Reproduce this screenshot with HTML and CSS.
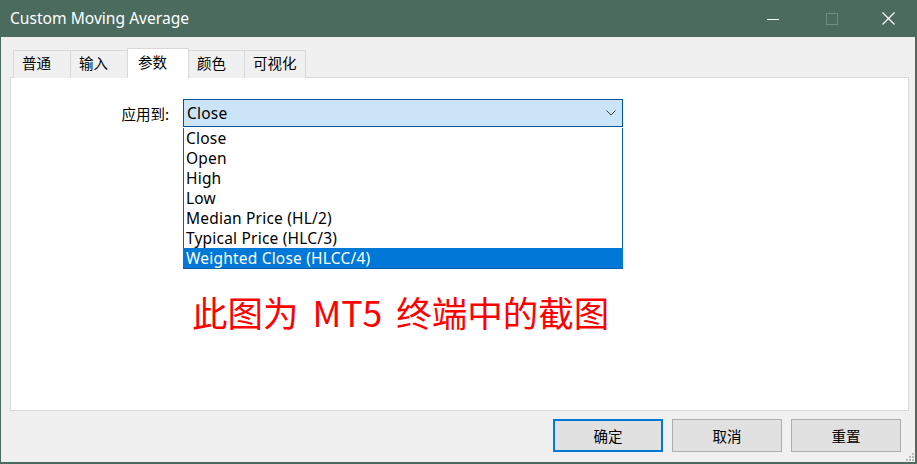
FILE: index.html
```html
<!DOCTYPE html>
<html lang="zh">
<head>
<meta charset="utf-8">
<title>Custom Moving Average</title>
<link rel="stylesheet" href="styles.css">
</head>
<body>
<div class="window">
  <div class="titlebar">
    <span class="title">Custom Moving Average</span>
    <div class="controls">
      <span class="ctl"><svg width="12" height="12" viewBox="0 0 12 12"><path d="M0 6.5H12" stroke="#fff" stroke-width="1"/></svg></span>
      <span class="ctl"><svg width="12" height="12" viewBox="0 0 12 12"><rect x="0.5" y="0.5" width="11" height="11" fill="none" stroke="#6f8b81" stroke-width="1"/></svg></span>
      <span class="ctl"><svg width="13" height="13" viewBox="0 0 13 13"><path d="M0.5 0.5L12.5 12.5M12.5 0.5L0.5 12.5" stroke="#fff" stroke-width="1.2"/></svg></span>
    </div>
  </div>
  <div class="body">
    <div class="tabs">
      <div class="tab">普通</div>
      <div class="tab">输入</div>
      <div class="tab active">参数</div>
      <div class="tab narrow">颜色</div>
      <div class="tab">可视化</div>
    </div>
    <div class="panel">
      <div class="row">
        <label class="label">应用到:</label>
        <div class="combo">
          <span class="combo-value">Close</span>
          <svg class="chev" width="10" height="6" viewBox="0 0 10 6"><path d="M0.5 0.5L5 5L9.5 0.5" fill="none" stroke="#444" stroke-width="1"/></svg>
          <ul class="list">
            <li>Close</li>
            <li>Open</li>
            <li>High</li>
            <li>Low</li>
            <li>Median Price (HL/2)</li>
            <li>Typical Price (HLC/3)</li>
            <li class="sel">Weighted Close (HLCC/4)</li>
          </ul>
        </div>
      </div>
      <div class="note">此图为 MT5 终端中的截图</div>
    </div>
    <div class="footer">
      <button class="btn primary">确定</button>
      <button class="btn">取消</button>
      <button class="btn">重置</button>
    </div>
    <div class="grip">
      <i></i><i></i><i></i><i></i><i></i><i></i>
    </div>
  </div>
</div>
</body>
</html>
```

FILE: styles.css
```css
* { box-sizing: border-box; }
html, body { margin: 0; padding: 0; }
body {
  width: 917px;
  height: 464px;
  overflow: hidden;
  font-family: "Noto Sans", "Noto Sans CJK SC", sans-serif;
  background: #4b6b5f;
}
.window {
  width: 917px;
  height: 464px;
  display: flex;
  flex-direction: column;
  background: #4b6b5f;
  padding: 0 2px 2px 1px;
}
.titlebar {
  height: 37px;
  display: flex;
  align-items: center;
  justify-content: space-between;
  color: #fff;
  flex: none;
}
.title {
  font-size: 15.6px;
  padding-left: 9px;
  padding-bottom: 1px;
}
.controls {
  display: flex;
  height: 100%;
}
.ctl {
  width: 59px;
  display: flex;
  align-items: center;
  justify-content: center;
}
.ctl:last-child { width: 54px; }
.body {
  flex: 1;
  background: #f0f0f0;
  position: relative;
  display: flex;
  flex-direction: column;
  padding: 11px 6px 0 9px;
}
.tabs {
  display: flex;
  align-items: flex-end;
  height: 30px;
  padding-left: 2px;
  position: relative;
  z-index: 2;
}
.tab {
  height: 28px;
  min-width: 58px;
  padding: 0 8px;
  border: 1px solid #d9d9d9;
  border-bottom: none;
  margin-left: -1px;
  background: #f0f0f0;
  font-family: "Noto Sans CJK SC", sans-serif;
  font-size: 14.5px;
  line-height: 24px;
  color: #000;
}
.tab:first-child { margin-left: 1px; }
.tab.narrow { min-width: 57px; }
.tab.active {
  height: 30px;
  min-width: 62px;
  background: #fff;
  padding-left: 10px;
  line-height: 25px;
  position: relative;
  z-index: 3;
}
.panel {
  margin-top: -1px;
  height: 334px;
  border: 1px solid #d9d9d9;
  background: #fff;
  padding-top: 21px;
  position: relative;
  z-index: 1;
}
.row {
  display: flex;
  align-items: center;
  height: 28px;
}
.label {
  width: 158px;
  text-align: right;
  font-family: "Noto Sans CJK SC", sans-serif;
  font-size: 14.5px;
  margin-right: 14px;
}
.combo {
  position: relative;
  width: 440px;
  height: 28px;
  border: 1px solid #005499;
  background: #cce4f7;
  display: flex;
  align-items: center;
  justify-content: space-between;
  padding: 0 6px 0 3px;
  font-size: 15.5px;
  letter-spacing: 0.2px;
}
.combo-value { line-height: 26px; }
.list {
  position: absolute;
  left: -1px;
  top: 28px;
  width: 440px;
  margin: 0;
  padding: 0;
  list-style: none;
  background: #fff;
  border: 1px solid #0a5fa8;
  border-top: none;
}
.list li {
  height: 20px;
  line-height: 20px;
  padding-left: 2px;
  font-size: 15.5px;
  letter-spacing: 0.2px;
  color: #000;
  white-space: nowrap;
}
.list li.sel {
  background: #0078d7;
  color: #fff;
  margin: 0 -1px;
  padding-left: 3px;
}
.note {
  margin-top: 163px;
  padding-left: 181px;
  font-family: "Noto Sans CJK SC", sans-serif;
  font-size: 35.5px;
  line-height: 44px;
  word-spacing: 6px;
  color: #ff0000;
}
.footer {
  display: flex;
  justify-content: flex-end;
  gap: 9px;
  margin-top: 8px;
  padding-right: 8px;
}
.btn {
  width: 110px;
  height: 33px;
  border: 1px solid #adadad;
  background: #e1e1e1;
  font-family: "Noto Sans CJK SC", sans-serif;
  font-size: 14.5px;
  color: #000;
  padding: 0;
}
.btn.primary {
  border: 2px solid #0078d7;
}
.grip {
  position: absolute;
  right: 1px;
  bottom: 1px;
  width: 10px;
  height: 10px;
}
.grip i {
  position: absolute;
  width: 2px;
  height: 2px;
  background: #b9b9b9;
}
.grip i:nth-child(1) { right: 0; bottom: 0; }
.grip i:nth-child(2) { right: 3px; bottom: 0; }
.grip i:nth-child(3) { right: 6px; bottom: 0; }
.grip i:nth-child(4) { right: 0; bottom: 3px; }
.grip i:nth-child(5) { right: 3px; bottom: 3px; }
.grip i:nth-child(6) { right: 0; bottom: 6px; }
```
